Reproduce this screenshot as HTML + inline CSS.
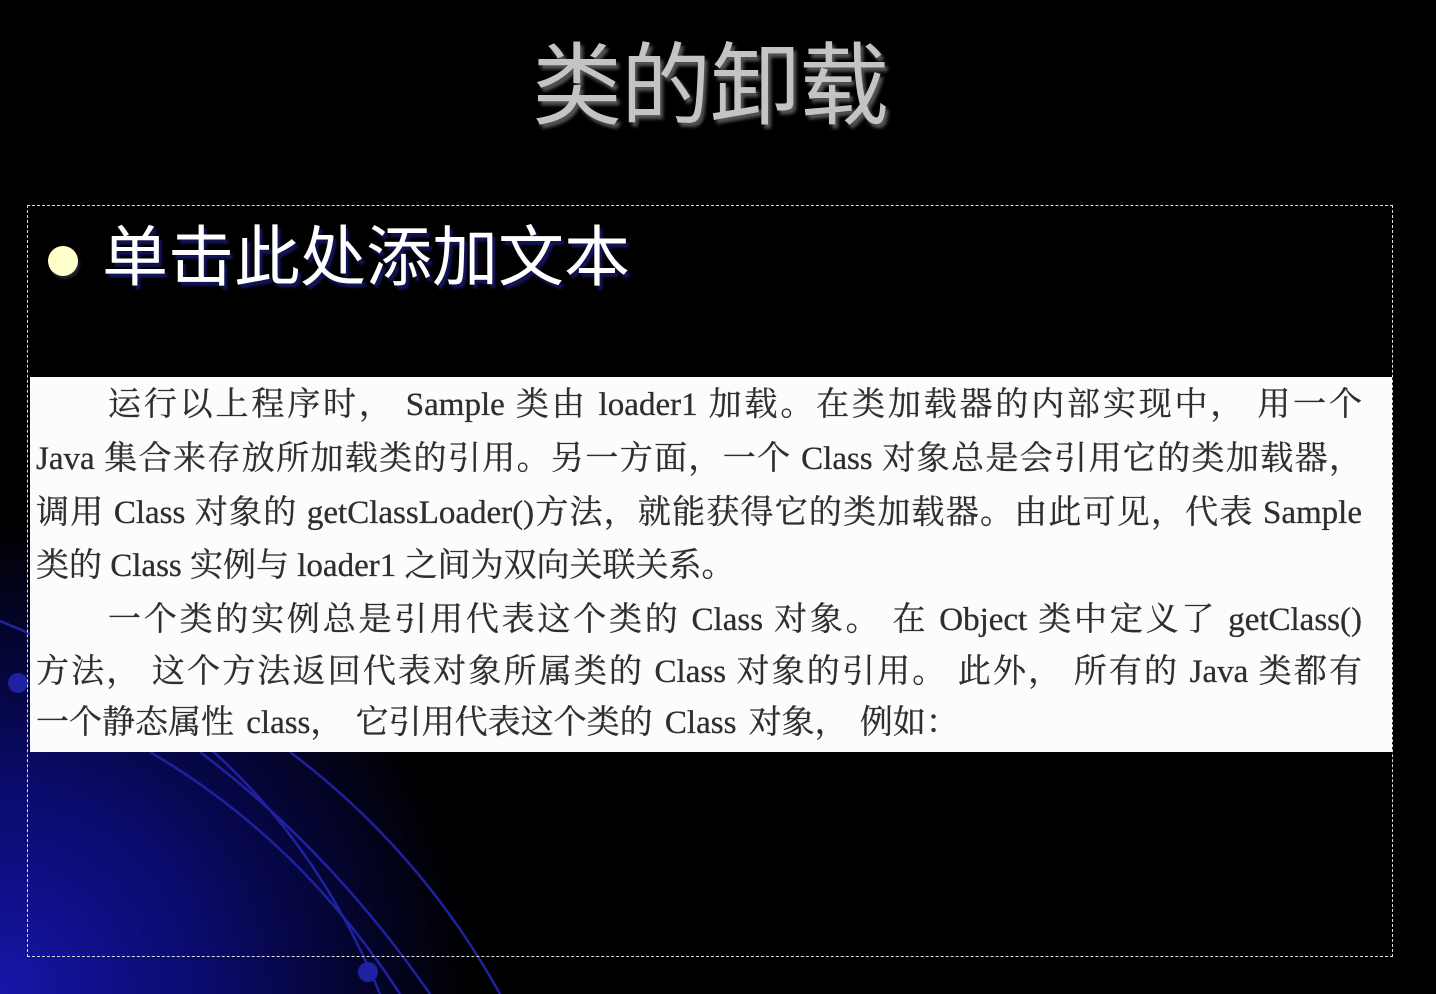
<!DOCTYPE html>
<html><head><meta charset="utf-8"><style>
html,body{margin:0;padding:0;width:1436px;height:994px;overflow:hidden;background:#000;}
body{position:relative;font-family:"Liberation Serif","Noto Serif CJK SC","Noto Sans CJK SC",serif;}
#bg{position:absolute;left:0;top:0;}
.title{position:absolute;left:520px;top:32px;width:380px;text-align:center;font-family:"Liberation Sans","Noto Sans CJK SC",sans-serif;font-size:90px;line-height:110px;color:#c4c4c4;text-shadow:3px 4px 3px #555;letter-spacing:-1px;}
.frame{position:absolute;left:27px;top:205px;width:1364px;height:750px;border:1px dashed #ddd;}
.bullet{position:absolute;left:48px;top:246px;width:30px;height:30px;border-radius:50%;background:#ffffcc;box-shadow:2px 3px 2px #223;}
.sub{position:absolute;left:102px;top:215px;font-family:"Liberation Sans","Noto Sans CJK SC",sans-serif;font-size:66px;line-height:84px;color:#fff;text-shadow:3px 4px 2px #14145a;}
.paper{position:absolute;left:30px;top:377px;width:1362px;height:375px;background:#fcfcfc;}
.ln{position:absolute;left:6px;width:1326px;height:40px;font-size:33px;line-height:40px;color:#2e2e2e;text-align:justify;text-align-last:justify;white-space:nowrap;-webkit-text-stroke:0.3px #2e2e2e;}
.ln.i{left:78px;width:1254px;}
.ln.last{text-align-last:left;}
</style></head><body>
<svg id="bg" width="1436" height="994">
<defs>
<radialGradient id="g" cx="0" cy="994" r="470" gradientUnits="userSpaceOnUse">
<stop offset="0" stop-color="#1616a8"/><stop offset="0.45" stop-color="#0a0a6a"/><stop offset="1" stop-color="#000"/></radialGradient>
</defs>
<rect width="1436" height="994" fill="url(#g)"/>
<g fill="none" stroke="#1e22a0" stroke-width="2.5">
<path d="M-60 600 Q260 700 380 994"/>
<path d="M150 752 Q300 840 400 994"/>
<path d="M200 752 Q330 850 430 994"/>
<path d="M290 752 Q420 850 500 994"/>
</g>
<circle cx="18" cy="683" r="10" fill="#1e22a0"/>
<circle cx="368" cy="972" r="10" fill="#1e22a0"/>
</svg>
<div class="title">类的卸载</div>
<div class="frame"></div>
<div class="bullet"></div>
<div class="sub">单击此处添加文本</div>
<div class="paper">
<div class="ln i" style="top:8px">运行以上程序时， Sample 类由 loader1 加载。在类加载器的内部实现中， 用一个</div>
<div class="ln" style="top:62px">Java 集合来存放所加载类的引用。另一方面，一个 Class 对象总是会引用它的类加载器，</div>
<div class="ln" style="top:116px">调用 Class 对象的 getClassLoader()方法，就能获得它的类加载器。由此可见，代表 Sample</div>
<div class="ln last" style="top:169px">类的 Class 实例与 loader1 之间为双向关联关系。</div>
<div class="ln i" style="top:223px">一个类的实例总是引用代表这个类的 Class 对象。 在 Object 类中定义了 getClass()</div>
<div class="ln" style="top:275px">方法， 这个方法返回代表对象所属类的 Class 对象的引用。 此外， 所有的 Java 类都有</div>
<div class="ln last" style="top:326px;word-spacing:4px">一个静态属性 class， 它引用代表这个类的 Class 对象， 例如：</div>
</div>
</body></html>
